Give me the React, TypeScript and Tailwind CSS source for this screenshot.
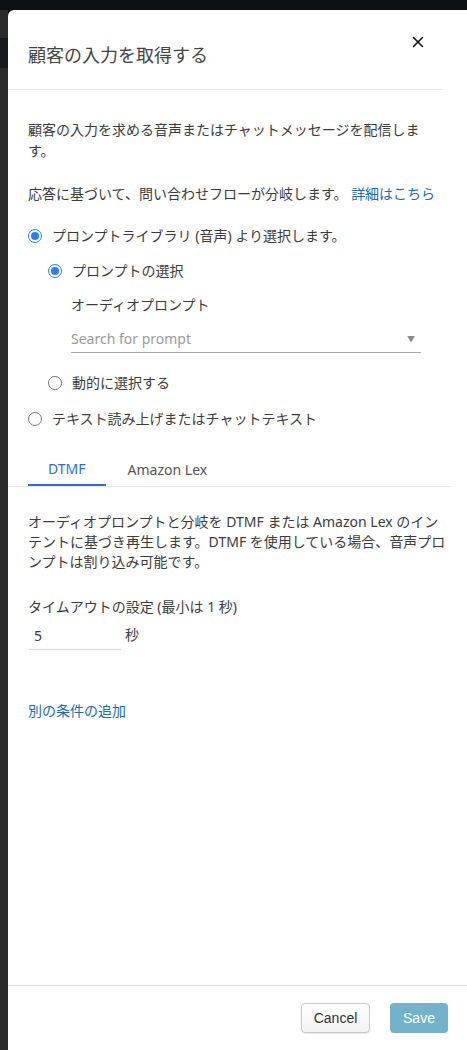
import { X } from 'lucide-react'

function Radio({ checked }: { checked?: boolean }) {
  if (checked)
    return (
      <span className="w-[14px] h-[14px] rounded-full border-[1.5px] border-[#2d7ff0] flex items-center justify-center shrink-0">
        <span className="w-[8px] h-[8px] rounded-full bg-[#2d7ff0]" />
      </span>
    )
  return <span className="w-[14px] h-[14px] rounded-full border border-[#777] bg-white shrink-0" />
}

function Option({ checked, label, className = '' }: { checked?: boolean; label: string; className?: string }) {
  return (
    <div className={`flex items-center gap-[10px] h-[21px] ${className}`}>
      <Radio checked={checked} />
      <span>{label}</span>
    </div>
  )
}

export default function App() {
  const font = { fontFamily: '"Noto Sans", "Noto Sans CJK JP", sans-serif' }
  return (
    <div className="min-h-[1050px] h-[1050px] bg-[#0d0f12] flex flex-col pt-[10px]" style={font}>
      <div className="flex flex-1 min-h-0">
        <div className="w-[8px] flex flex-col">
          <div className="h-[28px] bg-[#2b2b2c]" />
          <div className="h-[30px] bg-[#17181b]" />
          <div className="flex-1 bg-[#2a2a2b]" />
        </div>
        <div className="flex-1 bg-white rounded-tl-[6px] flex flex-col text-[14px] text-[#3b3b3b]">
          {/* header */}
          <div className="h-[80px] mr-[24px] border-b border-[#e8e8e8] flex items-start justify-between pl-[20px]">
            <h1 className="mt-[33px] text-[18px] leading-[24px] text-[#444] font-normal">顧客の入力を取得する</h1>
            <X className="mt-[23px] mr-[16px] w-[18px] h-[18px] text-[#111]" strokeWidth={2} />
          </div>

          {/* body */}
          <div className="flex-1 pl-[20px] pr-[20px] pt-[29px]">
            <p className="leading-[21px] pr-[8px]">顧客の入力を求める音声またはチャットメッセージを配信します。</p>
            <p className="leading-[21px] mt-[22px]">
              応答に基づいて、問い合わせフローが分岐します。 <span className="text-[#1a6bb8]">詳細はこちら</span>
            </p>

            <Option checked label="プロンプトライブラリ (音声) より選択します。" className="mt-[21px]" />
            <Option checked label="プロンプトの選択" className="mt-[14px] ml-[20px]" />
            <div className="ml-[43px] mt-[13px] leading-[21px]">オーディオプロンプト</div>
            <div className="ml-[43px] mt-[10px] mr-[26px] h-[28px] border-b border-[#aaa] flex items-center justify-between">
              <span className="text-[#9a9a9a]">Search for prompt</span>
              <span className="text-[8px] text-[#888] mr-[6px]">▼</span>
            </div>
            <Option label="動的に選択する" className="mt-[19px] ml-[20px]" />
            <Option label="テキスト読み上げまたはチャットテキスト" className="mt-[15px]" />

            {/* tabs */}
            <div className="-ml-[20px] mr-[-4px] mt-[23px] border-b border-[#e8e8e8] flex pl-[20px]">
              <div className="h-[34px] px-[20px] flex items-center text-[#2f6fd4] border-b-[2px] border-[#2f6fd4] -mb-px">DTMF</div>
              <div className="h-[34px] px-[22px] flex items-center text-[#555]">Amazon Lex</div>
            </div>

            <p className="leading-[20px] mt-[25px]">
              オーディオプロンプトと分岐を DTMF または Amazon Lex のインテントに基づき再生します。DTMF を使用している場合、音声プロンプトは割り込み可能です。
            </p>
            <div className="mt-[25px] leading-[20px]">タイムアウトの設定 (最小は 1 秒)</div>
            <div className="mt-[5px] flex items-end gap-[4px]">
              <div className="w-[92px] h-[28px] border-b border-[#d5d5d5] pl-[5px] flex items-center ml-[1px]">5</div>
              <span className="mb-[5px]">秒</span>
            </div>
            <div className="mt-[51px] leading-[20px] text-[#1a6bb8]">別の条件の追加</div>
          </div>

          {/* footer */}
          <div className="h-[65px] border-t border-[#dcdcdc] flex items-center justify-end gap-[20px] pr-[19px]">
            <button
              className="h-[30px] w-[69px] rounded-[4px] border border-[#c8c8c8] bg-gradient-to-b from-white to-[#f3f3f3] text-[#333] text-[14px] shadow-[0_1px_1px_rgba(0,0,0,0.08)]"
              style={{ fontFamily: '"Liberation Sans", Arial, sans-serif' }}
            >
              Cancel
            </button>
            <button
              className="h-[30px] w-[58px] rounded-[4px] bg-[#72b3cb] text-white text-[14px]"
              style={{ fontFamily: '"Liberation Sans", Arial, sans-serif' }}
            >
              Save
            </button>
          </div>
        </div>
      </div>
    </div>
  )
}
